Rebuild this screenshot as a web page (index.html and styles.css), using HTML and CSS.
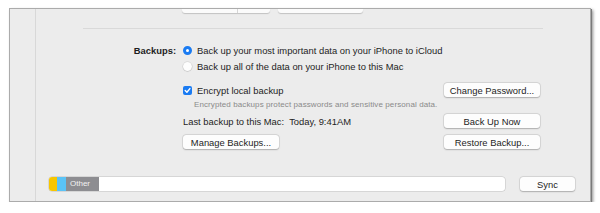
FILE: index.html
```html
<!DOCTYPE html>
<html>
<head>
<meta charset="utf-8">
<link rel="stylesheet" href="styles.css">
</head>
<body>
<div class="window">
  <div class="sidebar"></div>
  <div class="main">
    <div class="tabs">
      <div class="seg"><span class="seg-a"></span><span class="seg-b"></span></div>
      <div class="tabbtn"></div>
    </div>
    <div class="sep"></div>
    <div class="row r1">
      <div class="label">Backups:</div>
      <div class="opt"><span class="radio on"></span><span>Back up your most important data on your iPhone to iCloud</span></div>
    </div>
    <div class="row r2">
      <div class="label"></div>
      <div class="opt"><span class="radio"></span><span>Back up all of the data on your iPhone to this Mac</span></div>
    </div>
    <div class="row r3">
      <div class="label"></div>
      <div class="opt"><span class="check"><svg viewBox="0 0 9 9" width="9" height="9"><path d="M2.2 4.6 L3.9 6.3 L6.9 2.6" fill="none" stroke="#fff" stroke-width="1.4" stroke-linecap="round" stroke-linejoin="round"/></svg></span><span>Encrypt local backup</span></div>
      <button class="btn">Change Password...</button>
    </div>
    <div class="row r4">
      <div class="label"></div>
      <div class="note">Encrypted backups protect passwords and sensitive personal data.</div>
    </div>
    <div class="row r5">
      <div class="label"></div>
      <div class="opt">Last backup to this Mac:&nbsp; Today, 9:41AM</div>
      <button class="btn">Back Up Now</button>
    </div>
    <div class="row r6">
      <div class="label"></div>
      <button class="btn">Manage Backups...</button>
      <button class="btn right">Restore Backup...</button>
    </div>
    <div class="storage">
      <div class="bar">
        <span class="s-yellow"></span><span class="s-blue"></span><span class="s-other">Other</span>
      </div>
      <button class="btn sync">Sync</button>
    </div>
  </div>
</div>
</body>
</html>
```
FILE: styles.css
```css
* { box-sizing: border-box; }
html, body { margin: 0; padding: 0; background: #fff; }
body {
  font-family: "Liberation Sans", Arial, sans-serif;
  font-size: 9.4px;
  color: #1e1e1e;
}
.window {
  margin: 8px 0 0 9px;
  width: 582px;
  height: 194px;
  background: #ececec;
  border: 1px solid #ababab;
  box-shadow: 1px 1px 0 #7a7a7a, 2px 2px 3px rgba(0,0,0,0.45);
  display: flex;
}
.sidebar {
  width: 26px;
  border-right: 1px solid #d8d8d8;
}
.main {
  flex: 1;
  display: flex;
  flex-direction: column;
}
.tabs {
  display: flex;
  height: 4px;
  padding-left: 146px;
  gap: 8px;
}
.seg {
  display: flex;
  width: 88px;
  background: #fbfbfb;
  border-radius: 0 0 3px 3px;
  box-shadow: 0 1px 1px rgba(0,0,0,0.18);
}
.seg-a { width: 56px; border-right: 1px solid #d6d6d6; }
.seg-b { flex: 1; }
.tabbtn {
  width: 85px;
  background: #fbfbfb;
  border-radius: 0 0 3px 3px;
  box-shadow: 0 1px 1px rgba(0,0,0,0.18);
}
.sep {
  height: 1px;
  background: #d9d9d9;
  margin: 15px 47px 0;
}
.row {
  display: flex;
  align-items: center;
  height: 14px;
  padding-right: 50px;
}
.r1 { margin-top: 14px; }
.r2 { margin-top: 2px; }
.r3 { margin-top: 10px; }
.r4 { margin-top: 1px; height: 12px; }
.r5 { margin-top: 4px; }
.r6 { margin-top: 7px; }
.label {
  width: 147px;
  flex: none;
  text-align: right;
  padding-right: 7px;
  font-weight: bold;
}
.opt {
  display: flex;
  align-items: center;
  gap: 5px;
  flex: 1;
  white-space: nowrap;
}
.radio {
  width: 9px;
  height: 9px;
  border-radius: 50%;
  background: #fdfdfd;
  box-shadow: 0 0 0 0.5px rgba(0,0,0,0.12), 0 0.5px 1px rgba(0,0,0,0.15);
  flex: none;
}
.radio.on {
  background: #fff;
  border: 3px solid #1a7bf2;
  box-shadow: none;
}
.check {
  width: 9px;
  height: 9px;
  border-radius: 2px;
  background: #1a7bf2;
  flex: none;
  display: flex;
}
.note {
  padding-left: 11px;
  font-size: 8px;
  color: #8a8a8a;
  white-space: nowrap;
  letter-spacing: 0.1px;
}
.btn {
  font-family: inherit;
  font-size: 9.4px;
  color: #1e1e1e;
  width: 96px;
  height: 14px;
  padding: 0;
  border: none;
  border-radius: 3px;
  background: #fdfdfd;
  box-shadow: 0 0 0 0.5px rgba(0,0,0,0.12), 0 0.5px 1.5px rgba(0,0,0,0.22);
  flex: none;
}
.btn.right { margin-left: auto; }
.storage {
  display: flex;
  align-items: center;
  margin-top: 28px;
  padding: 0 14px 0 13px;
  gap: 15px;
}
.bar {
  width: 456px;
  height: 14px;
  background: #fff;
  border-radius: 3px;
  box-shadow: 0 0 0 0.5px rgba(0,0,0,0.18);
  display: flex;
  overflow: hidden;
}
.s-yellow { width: 8px; background: #f7c600; }
.s-blue { width: 9px; background: #5ac3f6; }
.s-other {
  width: 33px;
  background: #8d8d91;
  color: #f2f2f2;
  font-size: 8px;
  line-height: 14px;
  padding-left: 4px;
}
.btn.sync { width: 55px; }
```
